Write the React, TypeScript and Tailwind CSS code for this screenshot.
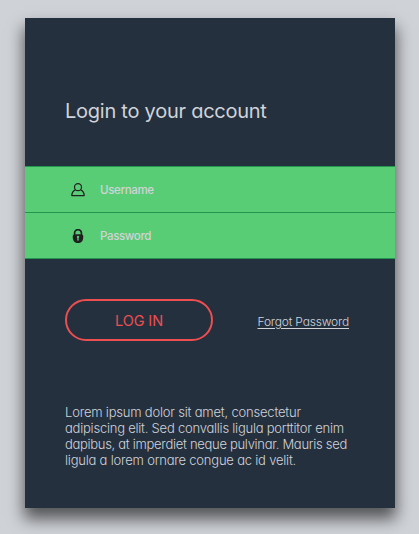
import React from "react";

const paragraph = [
  { text: "Lorem ipsum dolor sit amet, consectetur", style: "tracking-[-0.2px]" },
  { text: "adipiscing elit. Sed convallis ligula porttitor enim", style: "tracking-[-0.23px]" },
  { text: "dapibus, at imperdiet neque pulvinar. Mauris sed", style: "tracking-[-0.3px]" },
  { text: "ligula a lorem ornare congue ac id velit.", style: "tracking-[-0.21px]" },
];

function UserIcon() {
  return (
    <svg className="h-[14px] w-[14px] shrink-0" viewBox="0 0 14 14" fill="none" stroke="#202020" strokeWidth="1.25">
      <circle cx="7" cy="4.2" r="3.5" />
      <path d="M4.5 6.9C2.2 7.9 .8 9.6.8 12.6h12.4C13.2 9.6 11.8 7.9 9.5 6.9" strokeLinejoin="round" />
    </svg>
  );
}

function LockIcon() {
  return (
    <svg className="h-[14px] w-[14px] shrink-0" viewBox="0 0 14 14" fill="none">
      <path d="M3.6 7V4a3.4 3.4 0 0 1 6.8 0v3" stroke="#202020" strokeWidth="1.7" />
      <path d="M2 5.9C3.4 4.9 10.6 4.9 12 5.9C13 10.2 11.1 14 7 14S1 10.2 2 5.9Z" fill="#202020" />
      <path d="M5.8 8a1.2 1.2 0 1 1 1.8 1l.2 2.5H6.2L6.4 9a1.2 1.2 0 0 1-.6-1Z" fill="#58cd76" />
    </svg>
  );
}

function Field({ label, icon, type }: { label: string; icon: React.ReactNode; type: string }) {
  return (
    <label className="flex h-[46px] items-center border-b border-[#259650] bg-[#58cd76] pl-[46px]">
      {icon}
      <input
        type={type}
        placeholder={label}
        className="mb-[2px] ml-[15px] w-[220px] bg-transparent pt-[2px] text-[11.5px] leading-[16px] font-medium tracking-[-0.35px] outline-none placeholder:text-[#d0d3d8] placeholder:opacity-100"
      />
    </label>
  );
}

export default function App() {
  return (
    <main className="h-[534px] w-[419px] overflow-hidden bg-[#cfd2d7] pt-[18px] pl-[25px] font-['Inter',sans-serif]">
      <section className="flex h-[490px] w-[370px] flex-col bg-[#25303f] shadow-[0_10px_15px_1px_rgba(0,0,0,0.6)]">
        <h1 className="ml-[40px] h-[148px] pt-[78px] text-[20px] leading-[30px] font-normal tracking-[-0.25px] whitespace-nowrap text-[#d0d3d8] [font-feature-settings:'cv11']">
          Login to your account
        </h1>
        <form className="border-t border-[#259650]" onSubmit={(e) => e.preventDefault()}>
          <Field label="Username" type="text" icon={<UserIcon />} />
          <Field label="Password" type="password" icon={<LockIcon />} />
        </form>
        <div className="mt-[40px] flex items-center justify-between pr-[46px] pl-[40px]">
          <button className="h-[42px] w-[148px] rounded-full border-2 border-[#ed4e50] pt-px text-[14.5px] tracking-[-0.1px] text-[#ed4e50]">
            LOG IN
          </button>
          <a href="#" className="pt-[3px] text-[12px] leading-[16px] font-light tracking-[-0.18px] whitespace-nowrap text-[#d0d3d8] underline underline-offset-2 [font-feature-settings:'cv11']">
            Forgot Password
          </a>
        </div>
        <p className="mt-[63px] ml-[40px] text-[13px] leading-[16px] font-light whitespace-nowrap text-[#d0d3d8] [font-feature-settings:'cv11']">
          {paragraph.map((line) => (
            <span key={line.text} className={`block ${line.style}`}>{line.text}</span>
          ))}
        </p>
      </section>
    </main>
  );
}
